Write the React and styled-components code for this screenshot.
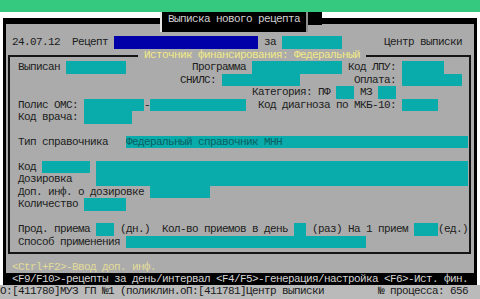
import React from 'react';
import styled, { createGlobalStyle } from 'styled-components';

// text-mode screen: 80 columns x 24 rows
const ROW = 12.46;
const COL = 6;

const GlobalStyle = createGlobalStyle`
  html, body {
    margin: 0;
    padding: 0;
    background: #fff;
  }
`;

const Screen = styled.div`
  width: 480px;
  height: 299px;
  overflow: hidden;
  display: flex;
  flex-direction: column;
  background: #fff;
  color: #1c1c1c;
  font-family: "Liberation Mono", "DejaVu Sans Mono", monospace;
  font-size: 11px;
  letter-spacing: -0.6px;
`;

const TopBar = styled.div`
  height: ${ROW}px;
  flex-shrink: 0;
  background: #35c97f;
`;

const Desk = styled.div`
  position: relative;
  flex-shrink: 0;
  background: #fff;
  padding: 5.5px 3px 0;
`;

const Window = styled.div`
  background: #ababab;
  border: 3px solid #000;
  border-top-width: 6.96px;
  border-bottom: none;
`;

const TitleTab = styled.div`
  position: absolute;
  top: 0;
  left: 160px;
  width: 148px;
  height: 19.5px;
  box-sizing: border-box;
  background: #000;
  border-left: 2px solid #e6e6e6;
  border-right: 2px solid #8e8e8e;
  padding-left: 6px;
  line-height: 14px;
  color: #d2d2d2;
  white-space: pre;

  &::after {
    content: '';
    position: absolute;
    top: 0;
    right: -16px;
    width: 14px;
    height: 12.5px;
    background: #000;
  }
`;

const Row = styled.div`
  display: flex;
  height: ${ROW}px;
  line-height: ${ROW}px;
  white-space: pre;
`;

const T = styled.span`
  white-space: pre;
  flex-shrink: 0;
  color: ${p => p.$color || 'inherit'};
`;

const Field = styled.span`
  display: block;
  flex-shrink: 0;
  width: ${p => p.w * COL}px;
  height: ${p => (p.h || 1) * ROW}px;
  background: ${p => (p.$tone === 'blue' ? '#0000a8' : '#0aabab')};
  color: #0b5e60;
  white-space: pre;
`;

const Frame = styled.div`
  position: relative;
  margin: 6.2px 3px 6.26px 2px;
  border: 2px solid #151515;
  padding: 4.26px 0 4.2px 8px;
`;

const Legend = styled.span`
  position: absolute;
  top: -8.2px;
  left: 128px;
  height: ${ROW}px;
  line-height: ${ROW}px;
  background: #ababab;
  color: #f2ea84;
  white-space: pre;
`;

const Block = styled.div`
  display: flex;
`;

const Stack = styled.div`
  display: flex;
  flex-direction: column;
  width: ${p => p.w * COL}px;
  flex-shrink: 0;
`;

const HintBar = styled(Row)`
  background: #000;
  color: #d4d4d4;
  margin: 0 -3px;
  padding-left: 3px;
`;

const StatusBar = styled(Row)`
  flex: 1;
  background: #bababa;
  color: #1a1a1a;
`;

export default function App() {
  return (
    <Screen>
      <GlobalStyle />
      <TopBar />
      <Desk>
        <TitleTab>Выписка нового рецепта</TitleTab>
        <Window>
          <Row />
          <Row>
            <T> 24.07.12  Рецепт </T>
            <Field w={24} $tone="blue" />
            <T> за </T>
            <Field w={10} />
            <T>       Центр выписки</T>
          </Row>

          <Frame>
            <Legend> Источник финансирования: Федеральный </Legend>
            <Row>
              <T>Выписан </T>
              <Field w={10} />
              <T>           Программа </T>
              <Field w={15} />
              <T> Код ЛПУ: </T>
              <Field w={7} />
            </Row>
            <Row>
              <T>{'                           СНИЛС: '}</T>
              <Field w={13} />
              <T>         Оплата: </T>
              <Field w={10} />
            </Row>
            <Row>
              <T>{'                                       Категория: ПФ '}</T>
              <Field w={3} />
              <T> МЗ </T>
              <Field w={3} />
            </Row>
            <Row>
              <T>Полис ОМС: </T>
              <Field w={10} />
              <T>-</T>
              <Field w={16} />
              <T>  Код диагноза по МКБ-10: </T>
              <Field w={6} />
            </Row>
            <Row>
              <T>Код врача: </T>
              <Field w={8} />
            </Row>
            <Row />
            <Row>
              <T>Тип справочника   </T>
              <Field w={57}>Федеральный справочник МНН</Field>
            </Row>
            <Row />
            <Block>
              <Stack w={13}>
                <Row>
                  <T>Код </T>
                  <Field w={8} />
                </Row>
                <Row>
                  <T>Дозировка</T>
                </Row>
              </Stack>
              <Field w={62} h={2} />
            </Block>
            <Row>
              <T>Доп. инф. о дозировке </T>
              <Field w={10} />
            </Row>
            <Row>
              <T>Количество </T>
              <Field w={7} />
            </Row>
            <Row />
            <Row>
              <T>Прод. приема </T>
              <Field w={3} />
              <T> (дн.)  Кол-во приемов в день </T>
              <Field w={2} />
              <T> (раз) На 1 прием </T>
              <Field w={4} />
              <T>(ед.)</T>
            </Row>
            <Row>
              <T>Способ применения </T>
              <Field w={40} />
            </Row>
          </Frame>

          <Row>
            <T $color="#e2dc98"> {'<Ctrl+F2>-Ввод доп. инф.'}</T>
          </Row>
          <HintBar>
            <T> {'<F9/F10>-рецепты за день/интервал <F4/F5>-генерация/настройка <F6>-Ист. фин.'}</T>
          </HintBar>
        </Window>
      </Desk>
      <StatusBar>
        <T>О:[411780]МУЗ ГП №1 (поликлин.оП:[411781]Центр выписки         № процесса: 656</T>
      </StatusBar>
    </Screen>
  );
}
